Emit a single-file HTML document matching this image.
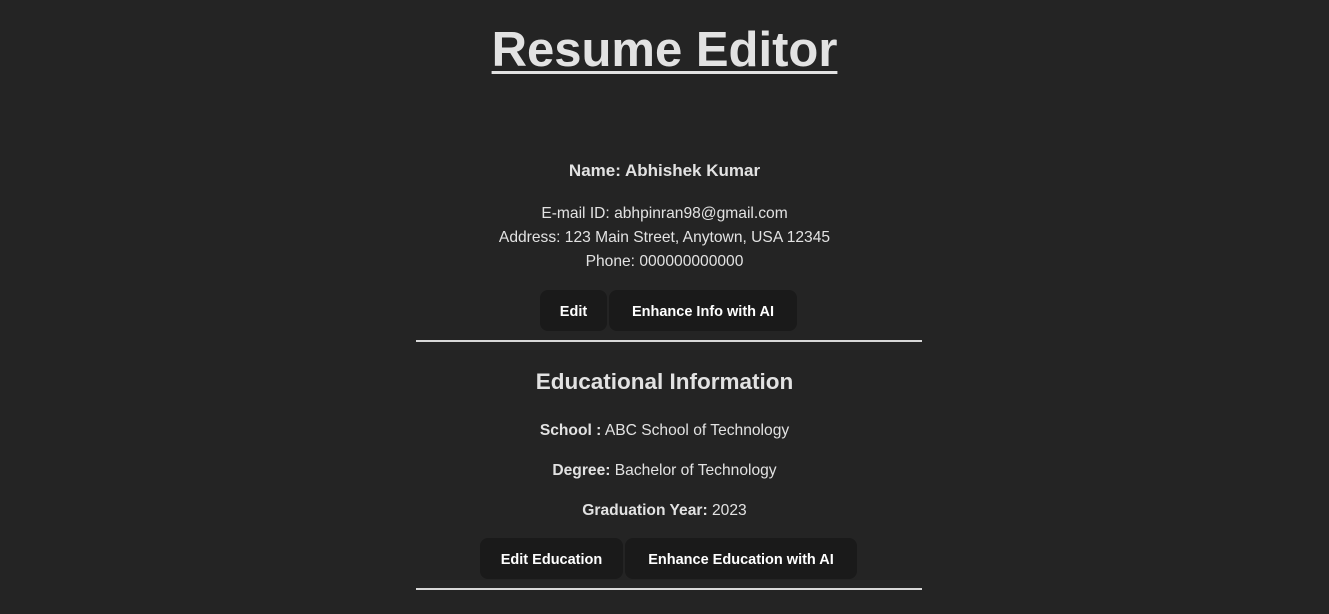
<!DOCTYPE html>
<html><head><meta charset="utf-8"><style>
html,body{margin:0;padding:0;background:#242424;width:1329px;height:614px;overflow:hidden}
body{font-family:"Liberation Sans",sans-serif;color:rgba(255,255,255,0.87);position:relative}
.c{position:absolute;left:0;width:1329px;text-align:center;white-space:nowrap}
h1{margin:0;font-size:49px;font-weight:bold;text-decoration:underline;text-decoration-thickness:3px;text-underline-offset:5px}
.t{font-size:15.6px;line-height:24px}
.btn{position:absolute;background:#1a1a1a;border-radius:8px;color:#fff;font-weight:bold;font-size:14.5px;display:flex;align-items:center;justify-content:center;padding-top:2px;box-sizing:border-box}
.hr{position:absolute;left:416px;width:506px;height:2px;background:#d8d8d8}
</style></head><body>
<div class="c" style="top:22px"><h1>Resume Editor</h1></div>
<div class="c t" style="top:159px;font-weight:bold;font-size:17px">Name: Abhishek Kumar</div>
<div class="c t" style="top:202px">E-mail ID: abhpinran98@gmail.com</div>
<div class="c t" style="top:226px">Address: 123 Main Street, Anytown, USA 12345</div>
<div class="c t" style="top:250px">Phone: 000000000000</div>
<div class="btn" style="left:540px;top:290px;width:67px;height:41px">Edit</div>
<div class="btn" style="left:609px;top:290px;width:188px;height:41px">Enhance Info with AI</div>
<div class="hr" style="top:340px"></div>
<div class="c" style="top:368px;font-size:22.5px;font-weight:bold;line-height:28px">Educational Information</div>
<div class="c t" style="top:419px"><b>School :</b> ABC School of Technology</div>
<div class="c t" style="top:459px"><b>Degree:</b> Bachelor of Technology</div>
<div class="c t" style="top:499px"><b>Graduation Year:</b> 2023</div>
<div class="btn" style="left:480px;top:538px;width:143px;height:41px">Edit Education</div>
<div class="btn" style="left:625px;top:538px;width:232px;height:41px">Enhance Education with AI</div>
<div class="hr" style="top:588px"></div>
</body></html>
